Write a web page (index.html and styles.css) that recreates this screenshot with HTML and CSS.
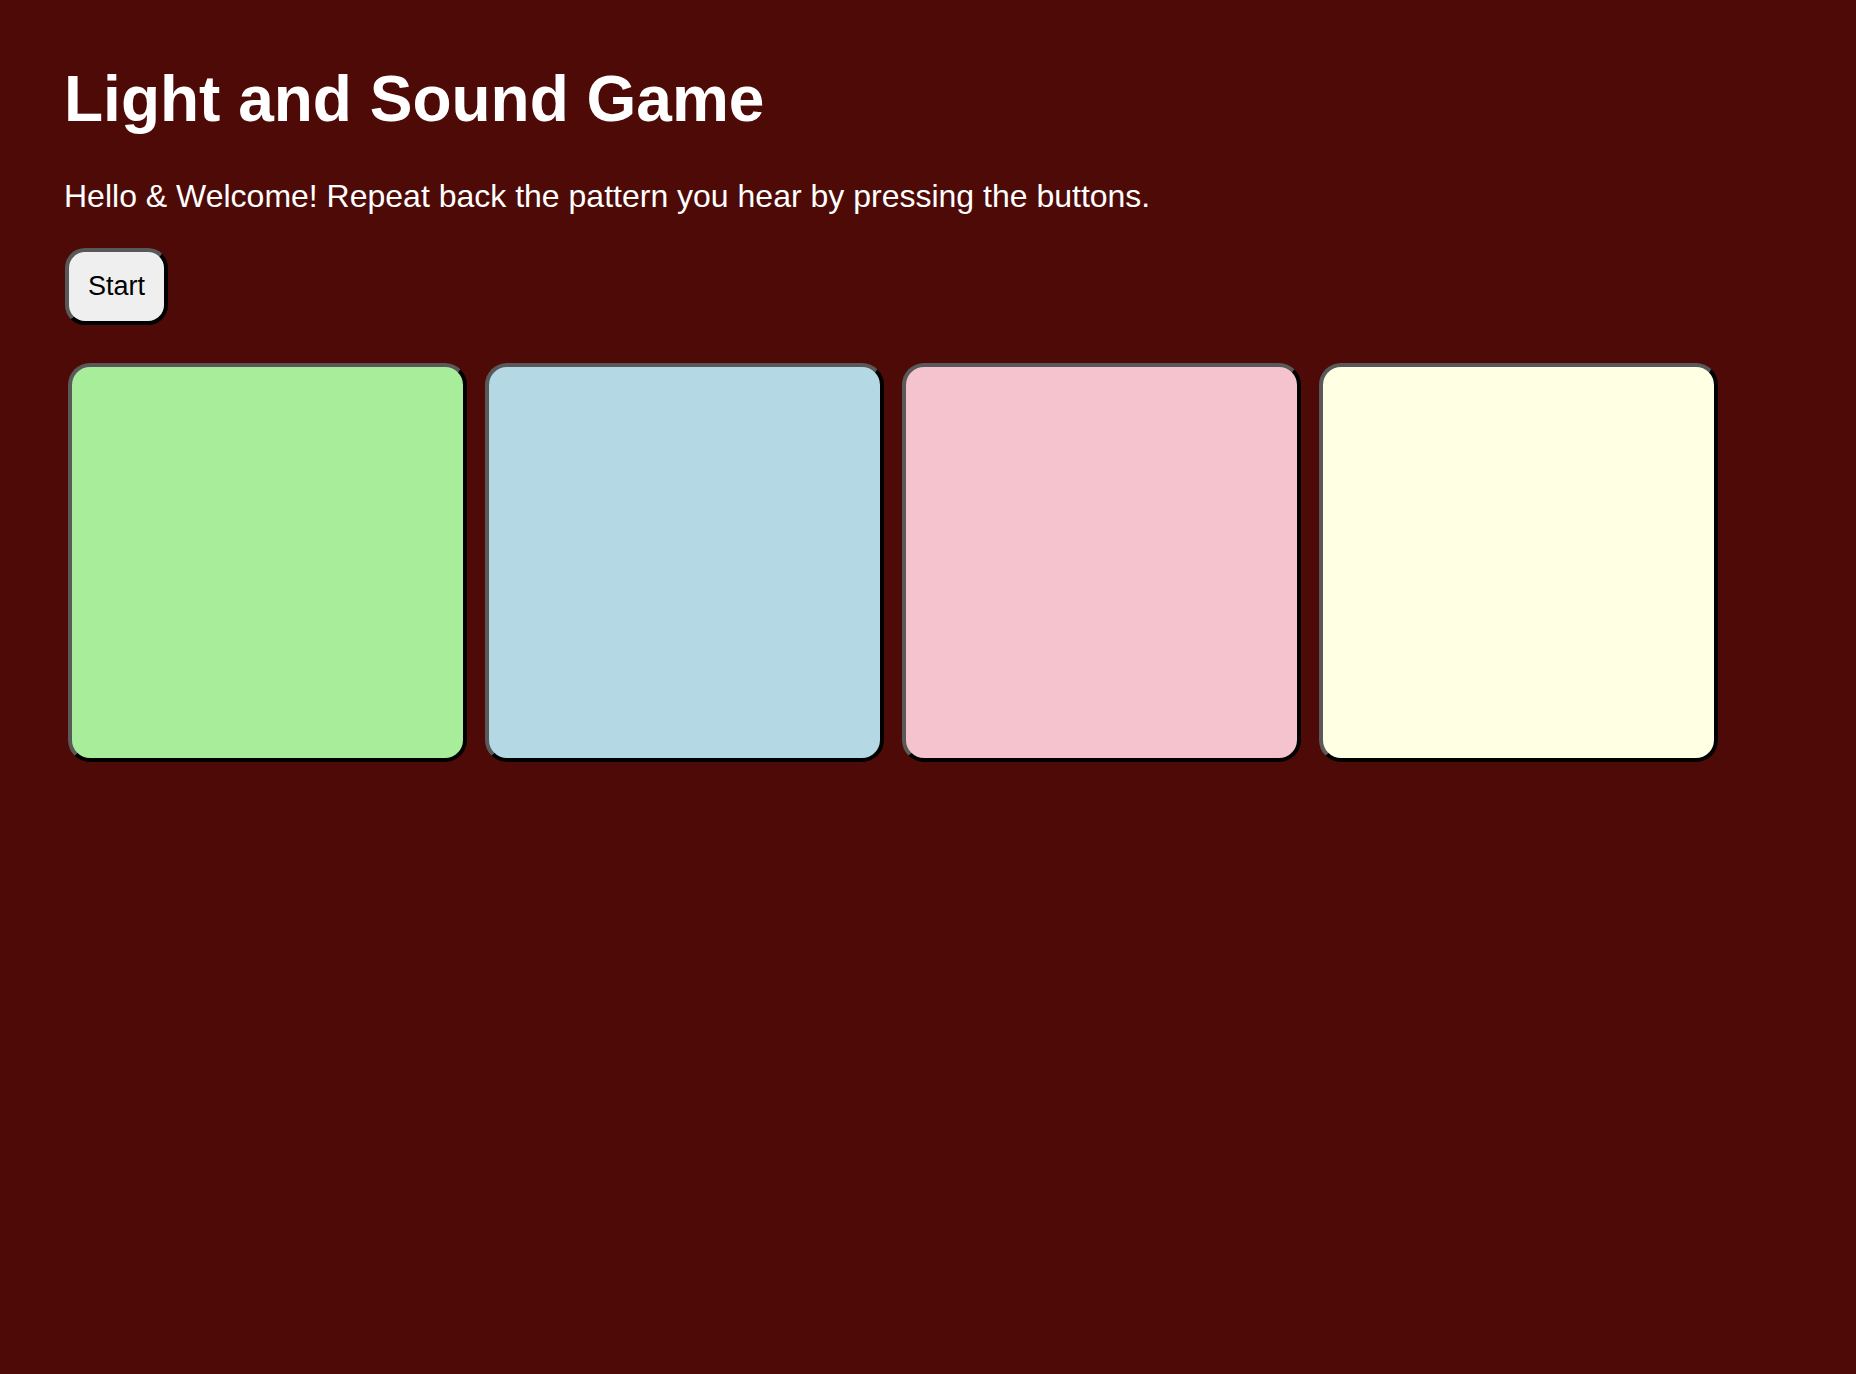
FILE: index.html
```html
<!DOCTYPE html>
<html>
<head>
<meta charset="utf-8">
<title>Light and Sound Game</title>
<link rel="stylesheet" href="styles.css">
</head>
<body>
  <h1 class="title">Light and Sound Game</h1>
  <p class="intro">Hello &amp; Welcome! Repeat back the pattern you hear by pressing the buttons.</p>
  <button class="start-btn" type="button">Start</button>
  <div class="game-area">
    <button class="pad pad-green" type="button"></button>
    <button class="pad pad-blue" type="button"></button>
    <button class="pad pad-pink" type="button"></button>
    <button class="pad pad-yellow" type="button"></button>
  </div>
</body>
</html>
```

FILE: styles.css
```css
html, body {
  margin: 0;
  background: #4e0a06;
}

body {
  padding: 0 0 0 64px;
  font-family: "Liberation Sans", Arial, Helvetica, sans-serif;
  color: #ffffff;
  min-height: 1374px;
  box-sizing: border-box;
}

.title {
  margin: 67px 0 0 0;
  font-size: 64px;
  line-height: 64px;
  font-weight: bold;
}

.intro {
  margin: 49px 0 0 0;
  font-size: 32px;
  line-height: 32px;
}

.start-btn {
  display: block;
  margin: 36px 0 0 1px;
  width: 103px;
  height: 77px;
  box-sizing: border-box;
  padding: 0;
  font-family: "Liberation Sans", Arial, Helvetica, sans-serif;
  font-size: 27px;
  color: #000;
  background: #efefef;
  border: 4px solid;
  border-color: #595959 #000 #000 #595959;
  border-radius: 20px;
}

.game-area {
  display: flex;
  gap: 18px;
  margin: 38px 0 0 4px;
}

.pad {
  width: 399px;
  height: 399px;
  box-sizing: border-box;
  padding: 0;
  border: 4px solid;
  border-color: #595959 #000 #000 #595959;
  border-radius: 22px;
}

.pad-green { background: #a8ed9a; }
.pad-blue { background: #b5d9e4; }
.pad-pink { background: #f5c3cd; }
.pad-yellow { background: #ffffe3; }
```
